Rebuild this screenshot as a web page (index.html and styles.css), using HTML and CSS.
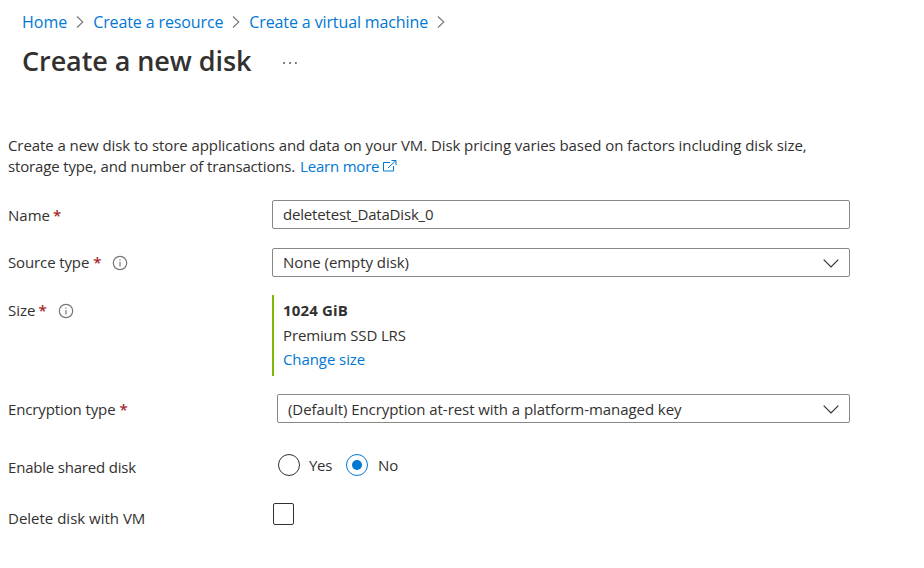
FILE: index.html
```html
<!DOCTYPE html>
<html lang="en">
<head>
<meta charset="utf-8">
<title>Create a new disk</title>
<link rel="stylesheet" href="styles.css">
</head>
<body>
<header class="header">
  <nav class="crumbs">
    <a class="crumb home" href="#">Home</a>
    <svg class="sep" viewBox="0 0 8 14"><path d="M1 1.5 6.8 7 1 12.5"/></svg>
    <a class="crumb resource" href="#">Create a resource</a>
    <svg class="sep" viewBox="0 0 8 14"><path d="M1 1.5 6.8 7 1 12.5"/></svg>
    <a class="crumb machine" href="#">Create a virtual machine</a>
    <svg class="sep" viewBox="0 0 8 14"><path d="M1 1.5 6.8 7 1 12.5"/></svg>
  </nav>
  <div class="title-row">
    <h1 class="title">Create a new disk</h1>
    <svg class="more" viewBox="0 0 14 2"><path d="M.3.2h1.600v1.600H.3zM6.200.2h1.600v1.600H6.200zM12.100.2h1.600v1.600h-1.600z"/></svg>
  </div>
</header>
<main class="content">
  <p class="intro"><span class="line-one">Create a new disk to store applications and data on your VM. Disk pricing varies based on factors including disk size,</span><br><span class="line-two">storage type, and number of transactions.</span> <a class="learn" href="#">Learn more</a><svg class="external" viewBox="0 0 14 14"><path d="M7 3.500H.5v8.500h10V7M8.500 1.500h4.500V6M13 1.500 5 9"/></svg></p>
  <form class="form">
    <div class="row name-row">
      <div class="label"><span class="t-name">Name</span><span class="star">*</span></div>
      <div class="field"><span class="t-value">deletetest_DataDisk_0</span></div>
    </div>
    <div class="row source-row">
      <div class="label"><span class="t-source">Source type</span><span class="star">*</span><svg class="info" viewBox="0 0 16 16"><circle cx="8" cy="8" r="6.700"/><path d="M8 7v4.500M8 4.500v1.200"/></svg></div>
      <div class="field"><span class="t-none">None (empty disk)</span><svg class="chevron" viewBox="0 0 16 9"><path d="m.7.7 7.300 7.300L15.300.7"/></svg></div>
    </div>
    <div class="row size-row">
      <div class="label"><span class="t-size">Size</span><span class="star">*</span><svg class="info" viewBox="0 0 16 16"><circle cx="8" cy="8" r="6.700"/><path d="M8 7v4.500M8 4.500v1.200"/></svg></div>
      <div class="size-card">
        <strong class="capacity">1024 GiB</strong>
        <span class="tier">Premium SSD LRS</span>
        <a class="change" href="#">Change size</a>
      </div>
    </div>
    <div class="row encryption-row">
      <div class="label"><span class="t-enc">Encryption type</span><span class="star">*</span></div>
      <div class="field inset"><span class="t-default">(Default) Encryption at-rest with a platform-managed key</span><svg class="chevron" viewBox="0 0 16 9"><path d="m.7.7 7.300 7.300L15.300.7"/></svg></div>
    </div>
    <div class="row shared-row">
      <div class="label"><span class="t-shared">Enable shared disk</span></div>
      <div class="radios">
        <span class="radio"></span><span class="option yes">Yes</span>
        <span class="radio checked"></span><span class="option">No</span>
      </div>
    </div>
    <div class="row delete-row">
      <div class="label"><span class="t-delete">Delete disk with VM</span></div>
      <span class="checkbox"></span>
    </div>
  </form>
</main>
</body>
</html>
```
FILE: styles.css
```css
* { box-sizing: border-box; }
body { margin: 0; background: #fff; color: #323130; font: 15px/21px "Open Sans", "Noto Sans", sans-serif; white-space: nowrap; }
a { color: #0078d4; text-decoration: none; }
svg { fill: none; flex: none; }
.header { height: 135px; padding: 11px 22px 0; }
.crumbs { display: flex; align-items: center; height: 22px; font-size: 16px; }
.resource { letter-spacing: -0.12px; }
.machine { letter-spacing: -0.12px; }
.sep { width: 8px; height: 14px; margin: 0 9px; stroke: #767676; stroke-width: 1.1; }
.title-row { display: flex; align-items: center; height: 40px; margin-top: 8px; }
.title { margin: 0; font-size: 27px; line-height: 38px; font-weight: 600; letter-spacing: -0.07px; }
.more { width: 14px; height: 2px; margin: 3px 0 0 32px; fill: #323130; }
.content { padding: 0 8px; }
.intro { margin: 0 0 23px; height: 42px; }
.line-one { letter-spacing: -0.076px; }
.line-two { letter-spacing: -0.15px; }
.learn { margin-left: 1px; letter-spacing: -0.2px; }
.external { width: 14px; height: 14px; margin-left: 4px; vertical-align: -1px; stroke: #0078d4; stroke-width: 1; }
.row { display: grid; grid-template-columns: 264px 578px; align-items: start; }
.label { display: flex; align-items: center; height: 29px; }
.star { margin-left: 4px; color: #a4262c; font-weight: 600; }
.info { width: 16px; height: 16px; margin-left: 11px; stroke: #797775; stroke-width: 1.2; }
.field { display: flex; align-items: center; justify-content: space-between; height: 29px; padding: 0 10px; border: 1px solid #8a8886; border-radius: 2px; }
.inset { margin-left: 5px; }
.chevron { width: 16px; height: 9px; margin-top: 1px; stroke: #323130; stroke-width: 1.2; }
.t-value { letter-spacing: -0.18px; }
.t-source, .t-enc { letter-spacing: -0.12px; }
.t-none, .t-default { letter-spacing: -0.06px; }
.t-shared { letter-spacing: -0.2px; }
.name-row { height: 48px; }
.source-row { height: 47px; }
.size-row { height: 99px; }
.name-row .label, .size-row .label, .encryption-row .label, .delete-row .label { padding-top: 2px; }
.name-row .star, .size-row .star { margin-left: 3px; }
.size-card { display: flex; flex-direction: column; height: 81px; padding: 3px 0 0 9px; border-left: 2px solid #7fba00; line-height: 24.500px; }
.capacity { font-weight: 700; letter-spacing: 0.15px; }
.tier { letter-spacing: -0.13px; }
.change { letter-spacing: -0.08px; }
.encryption-row { height: 60px; }
.t-default { margin-top: 2px; }
.shared-row { height: 49px; }
.shared-row .label { height: 27px; }
.radios { display: flex; align-items: center; height: 22px; padding-left: 6px; }
.radio { width: 22px; height: 22px; border: 1px solid #323130; border-radius: 50%; }
.radio.checked { display: grid; place-items: center; border-color: #0078d4; }
.radio.checked::after { content: ""; width: 10px; height: 10px; border-radius: 50%; background: #0078d4; }
.option { margin: 0 0 0 10px; }
.yes { width: 36px; margin-left: 9px; margin-right: 1px; letter-spacing: -0.3px; }
.checkbox { width: 21px; height: 22px; margin-left: 1px; border: 1px solid #323130; border-radius: 2px; }
```
